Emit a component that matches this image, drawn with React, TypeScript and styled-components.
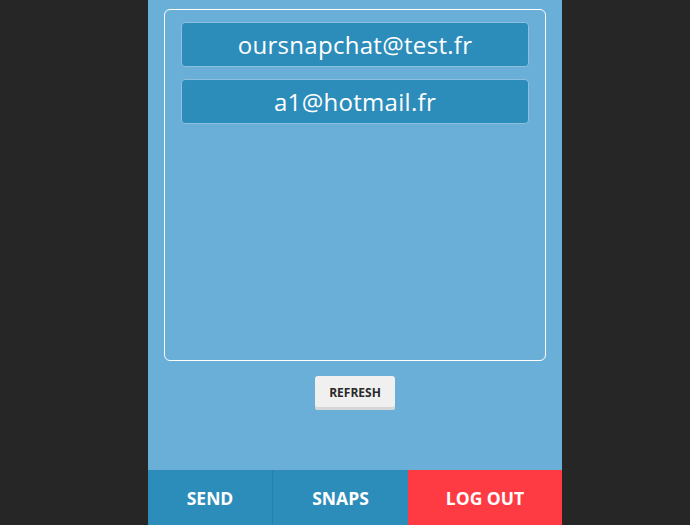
import React from "react";
import styled, { createGlobalStyle } from "styled-components";

const Global = createGlobalStyle`
  html, body { margin: 0; padding: 0; background: #262626; height: 100%; }
  #root { height: 100%; }
  * { box-sizing: border-box; }
`;

const Page = styled.div`
  display: flex;
  justify-content: center;
  padding-left: 20px;
  height: 525px;
  overflow: hidden;
  font-family: "Open Sans", "Noto Sans", sans-serif;
`;

const Column = styled.div`
  width: 414px;
  height: 525px;
  background: #6aafd8;
  display: flex;
  flex-direction: column;
`;

const Content = styled.div`
  flex: 1;
  display: flex;
  flex-direction: column;
  align-items: center;
  padding: 9px 16px 0;
`;

const ListBox = styled.div`
  width: 382px;
  height: 352px;
  border: 1px solid #ffffff;
  border-radius: 6px;
  padding: 12px 16px;
  display: flex;
  flex-direction: column;
  gap: 12px;
`;

const Contact = styled.div`
  height: 45px;
  background: #2d8dba;
  border: 1px solid #8cc0de;
  border-radius: 4px;
  color: #ffffff;
  font-size: 24px;
  font-weight: 500;
  letter-spacing: 0.3px;
  display: flex;
  align-items: center;
  justify-content: center;
  padding-bottom: 1px;
`;

const RefreshButton = styled.button`
  margin-top: 15px;
  width: 80px;
  height: 34px;
  background: #f0f0f0;
  border: none;
  border-radius: 3px;
  box-shadow: inset 0 -3px 0 #d6d6d6;
  font-family: "Open Sans", "Noto Sans", sans-serif;
  font-weight: 700;
  font-size: 12px;
  color: #2a2a2a;
  padding: 0 0 2px;
`;

const NavBar = styled.div`
  height: 55px;
  display: grid;
  grid-template-columns: 124px 136px 1fr;
`;

const NavItem = styled.div<{ $bg: string; $divider?: boolean }>`
  background: ${(p) => p.$bg};
  border-left: ${(p) => (p.$divider ? "1px solid #2580ab" : "none")};
  color: #ffffff;
  font-weight: 700;
  font-size: 17.5px;
  display: flex;
  align-items: center;
  justify-content: center;
`;

export default function App() {
  return (
    <>
      <Global />
      <Page>
        <Column>
          <Content>
            <ListBox>
              <Contact>oursnapchat@test.fr</Contact>
              <Contact>a1@hotmail.fr</Contact>
            </ListBox>
            <RefreshButton>REFRESH</RefreshButton>
          </Content>
          <NavBar>
            <NavItem $bg="#2d8dba">SEND</NavItem>
            <NavItem $bg="#2d8dba" $divider>SNAPS</NavItem>
            <NavItem $bg="#fe3a43">LOG OUT</NavItem>
          </NavBar>
        </Column>
      </Page>
    </>
  );
}
